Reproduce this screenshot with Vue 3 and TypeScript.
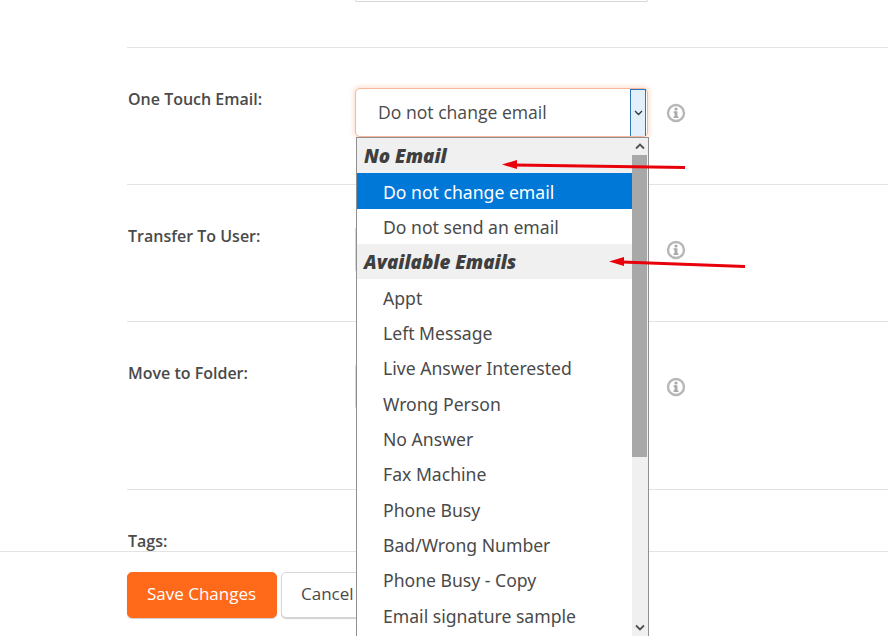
<script setup lang="ts">
interface Item { text: string; group?: boolean; selected?: boolean }
const items: Item[] = [
  { text: 'No Email', group: true },
  { text: 'Do not change email', selected: true },
  { text: 'Do not send an email' },
  { text: 'Available Emails', group: true },
  { text: 'Appt' },
  { text: 'Left Message' },
  { text: 'Live Answer Interested' },
  { text: 'Wrong Person' },
  { text: 'No Answer' },
  { text: 'Fax Machine' },
  { text: 'Phone Busy' },
  { text: 'Bad/Wrong Number' },
  { text: 'Phone Busy - Copy' },
  { text: 'Email signature sample' },
]
</script>

<template>
  <div class="page">
    <div class="stub"><div class="stub-select"></div></div>

    <section class="row first">
      <label class="label">One Touch Email:</label>
      <div class="field">
        <div class="select focused">
          <span class="value">Do not change email</span>
          <span class="drop-btn">
            <svg width="9" height="6" viewBox="0 0 9 6"><path d="M1 1l3.5 3.5L8 1" fill="none" stroke="#333" stroke-width="1.3" /></svg>
          </span>
        </div>
        <div class="dropdown">
          <ul class="list">
            <li v-for="item in items" :key="item.text" :class="{ group: item.group, selected: item.selected }">{{ item.text }}</li>
          </ul>
          <div class="scrollbar">
            <span class="sb-btn up">
              <svg width="10" height="7" viewBox="0 0 10 7"><path d="M1 5.5l4-4 4 4" fill="none" stroke="#505050" stroke-width="1.8" /></svg>
            </span>
            <span class="thumb"></span>
            <span class="sb-btn down">
              <svg width="10" height="7" viewBox="0 0 10 7"><path d="M1 1.5l4 4 4-4" fill="none" stroke="#505050" stroke-width="1.8" /></svg>
            </span>
          </div>
        </div>
      </div>
      <svg class="info" width="20" height="20" viewBox="0 0 20 20"><circle cx="10" cy="10" r="8" fill="none" stroke="#b7b7b7" stroke-width="2.4" /><circle cx="10" cy="6" r="1.6" fill="#a9a9a9" /><path d="M7.6 8.3h3.8v5h1v1.6H7.6v-1.6h1v-3.4h-1z" fill="#a9a9a9" /></svg>
    </section>

    <section class="row">
      <label class="label">Transfer To User:</label>
      <div class="field"><div class="select"></div></div>
      <svg class="info" width="20" height="20" viewBox="0 0 20 20"><circle cx="10" cy="10" r="8" fill="none" stroke="#b7b7b7" stroke-width="2.4" /><circle cx="10" cy="6" r="1.6" fill="#a9a9a9" /><path d="M7.6 8.3h3.8v5h1v1.6H7.6v-1.6h1v-3.4h-1z" fill="#a9a9a9" /></svg>
    </section>

    <section class="row tall">
      <label class="label">Move to Folder:</label>
      <div class="field"><div class="select"></div></div>
      <svg class="info" width="20" height="20" viewBox="0 0 20 20"><circle cx="10" cy="10" r="8" fill="none" stroke="#b7b7b7" stroke-width="2.4" /><circle cx="10" cy="6" r="1.6" fill="#a9a9a9" /><path d="M7.6 8.3h3.8v5h1v1.6H7.6v-1.6h1v-3.4h-1z" fill="#a9a9a9" /></svg>
    </section>

    <section class="row tags">
      <label class="label">Tags:</label>
    </section>

    <footer class="footer">
      <button class="btn primary">Save Changes</button>
      <button class="btn">Cancel</button>
    </footer>

    <svg class="annotations" width="888" height="636" viewBox="0 0 888 636">
      <path d="M685 167.5L515 165" fill="none" stroke="#e8000b" stroke-width="2.8" />
      <path d="M502 164.5l15-4.5v9z" fill="#e8000b" />
      <path d="M745 266.5L622 262" fill="none" stroke="#e8000b" stroke-width="2.8" />
      <path d="M609 261.5l15-4.5v9z" fill="#e8000b" />
    </svg>
  </div>
</template>

<style scoped>
.page {
  position: relative;
  width: 888px;
  height: 636px;
  overflow: hidden;
  background: #fff;
  font-family: "Open Sans", Lato, sans-serif;
  color: #4a4a4a;
}
.stub {
  height: 47px;
  padding-left: 355px;
}
.stub-select {
  width: 293px;
  height: 2px;
  border: 1px solid #d6d6d6;
  border-top: 0;
  border-radius: 0 0 5px 5px;
  box-sizing: border-box;
}
.row {
  display: flex;
  align-items: flex-start;
  height: 137px;
  box-sizing: border-box;
  margin-left: 127px;
  border-top: 1px solid #e3e3e3;
  padding-top: 40px;
}
.row.tall {
  height: 168px;
}
.row.tags {
  height: 62px;
  padding-top: 40px;
}
.label {
  width: 228px;
  padding-left: 1px;
  box-sizing: border-box;
  font-size: 16px;
  font-weight: 600;
  line-height: 22px;
  color: #4a4a4a;
}
.field {
  position: relative;
  width: 293px;
}
.select {
  display: flex;
  align-items: center;
  justify-content: space-between;
  height: 49px;
  box-sizing: border-box;
  border: 1px solid #d6d6d6;
  border-radius: 5px;
  background: #fff;
}
.select.focused {
  border-color: #f6b79a;
  box-shadow: 0 0 4px 2px #fde4d8;
}
.value {
  padding: 0 0 1px 22px;
  font-size: 17.6px;
}
.drop-btn {
  display: flex;
  align-items: center;
  justify-content: center;
  align-self: stretch;
  width: 16px;
  margin-right: 1px;
  box-sizing: border-box;
  border: 1px solid #2a76b8;
  border-bottom: 0;
  background: #e2f0fb;
}
.dropdown {
  position: absolute;
  top: 49px;
  left: 1px;
  z-index: 2;
  display: flex;
  width: 293px;
  height: 499px;
  box-sizing: border-box;
  border: 1px solid #8f8f8f;
  border-bottom: 0;
  background: #fff;
  font-family: "Noto Sans", sans-serif;
}
.list {
  flex: 1;
  margin: 0;
  padding: 0;
  list-style: none;
  overflow: hidden;
}
.list li {
  height: 35.33px;
  box-sizing: border-box;
  padding: 0.3px 0 0 26px;
  font-size: 17.6px;
  line-height: 37px;
  white-space: nowrap;
  color: #4a4a4a;
}
.list li.group {
  padding: 0 0 0 7px;
  background: #f0f0f0;
  font-size: 18.8px;
  font-weight: 900;
  font-style: italic;
  color: #3f3f3f;
}
.list li.selected {
  background: #0078d7;
  color: #fff;
}
.scrollbar {
  display: flex;
  flex-direction: column;
  width: 16px;
  background: #f0f0f0;
}
.sb-btn {
  display: flex;
  align-items: center;
  justify-content: center;
  height: 17px;
  flex: none;
}
.thumb {
  height: 302px;
  flex: none;
  margin-right: 1px;
  background: #a8a8a8;
}
.down {
  margin-top: auto;
}
.info {
  margin: 15px 0 0 18px;
}
.footer {
  display: flex;
  gap: 4px;
  height: 85px;
  box-sizing: border-box;
  border-top: 1px solid #e3e3e3;
  margin-left: 0;
  padding: 20px 0 0 127px;
}
.btn {
  width: 150px;
  height: 46px;
  box-sizing: border-box;
  border: 1px solid #d6d6d6;
  border-radius: 5px;
  background: #fff;
  box-shadow: 0 1px 1px #cfcfcf;
  font-family: "Open Sans", Lato, sans-serif;
  font-size: 17px;
  color: #4a4a4a;
  text-align: left;
  padding: 0 0 4px 19px;
}
.btn.primary {
  border-color: #ff6a1a;
  background: #ff6a1a;
  color: #fff;
}
.annotations {
  position: absolute;
  inset: 0;
  z-index: 3;
  pointer-events: none;
}
</style>
